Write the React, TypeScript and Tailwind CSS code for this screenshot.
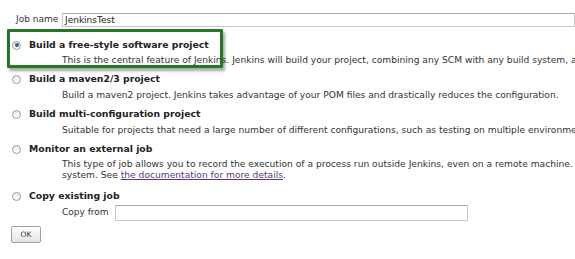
const Radio = ({ checked }: { checked?: boolean }) => (
	<span className="relative inline-block w-[9px] h-[9px] rounded-full border border-[#9a9a9a] bg-gradient-to-b from-[#e8e8e8] to-[#ffffff] shrink-0">
		{checked && <span className="absolute left-[1.5px] top-[1.5px] w-[4px] h-[4px] rounded-full bg-[#2a5f9e]" />}
	</span>
);

const Header = ({ label, checked, mt }: { label: string; checked?: boolean; mt: string }) => (
	<div className={`flex items-center h-[14px] pl-[12px] ${mt}`}>
		<Radio checked={checked} />
		<span className="ml-[8px] font-bold text-[9.3px] text-[#222] whitespace-nowrap">{label}</span>
	</div>
);

const Desc = ({ children, mt }: { children: React.ReactNode; mt: string }) => (
	<div className={`pl-[62px] text-[9.15px] leading-[11px] text-[#333] whitespace-nowrap ${mt}`}>{children}</div>
);

export default function App() {
	return (
		<div className="relative w-[575px] h-[259px] overflow-hidden bg-white" style={{ fontFamily: '"DejaVu Sans", Verdana, sans-serif' }}>
			<div className="pt-[13px]">
				<div className="flex items-center h-[14px]">
					<span className="pl-[16px] w-[62px] text-[9px] text-[#333] whitespace-nowrap">Job name</span>
					<div className="flex-1 h-[14px] border border-[#c8c8c8] border-t-[#a8a8a8] pl-[2px] text-[9px] leading-[12px] text-[#222]">JenkinsTest</div>
				</div>

				<Header label="Build a free-style software project" checked mt="mt-[11px]" />
				<Desc mt="mt-[3px]">
					This is the central feature of Jenkins. Jenkins will build your project, combining any SCM with any build system, and this
				</Desc>

				<Header label="Build a maven2/3 project" mt="mt-[6px]" />
				<Desc mt="mt-[4px]">
					Build a maven2 project. Jenkins takes advantage of your POM files and drastically reduces the configuration.
				</Desc>

				<Header label="Build multi-configuration project" mt="mt-[6px]" />
				<Desc mt="mt-[4px]">
					Suitable for projects that need a large number of different configurations, such as testing on multiple environments,
				</Desc>

				<Header label="Monitor an external job" mt="mt-[6px]" />
				<Desc mt="mt-[3px]">
					<div>This type of job allows you to record the execution of a process run outside Jenkins, even on a remote machine. This</div>
					<div>
						system. See <span className="underline text-[#5b3a7a]">the documentation for more details</span>.
					</div>
				</Desc>

				<Header label="Copy existing job" mt="mt-[8px]" />
				<div className="flex items-center h-[16px] mt-[2px] pl-[62px]">
					<span className="w-[53px] text-[9px] text-[#333] whitespace-nowrap">Copy from</span>
					<div className="w-[353px] h-[16px] border border-[#c8c8c8] border-t-[#a8a8a8]" />
				</div>

				<div className="pl-[11px] mt-[5px]">
					<div className="w-[30px] h-[17px] border border-[#a0a0a0] rounded-[2px] bg-gradient-to-b from-[#ffffff] to-[#e4e4e4] flex items-center justify-center text-[7.5px] text-[#333]">
						OK
					</div>
				</div>
			</div>

			<div className="absolute left-[7px] top-[29px] w-[216px] h-[39px] border-[3px] border-[#217a21] rounded-[1px] shadow-[2px_3px_3px_rgba(0,0,0,0.35)]" />
		</div>
	);
}
